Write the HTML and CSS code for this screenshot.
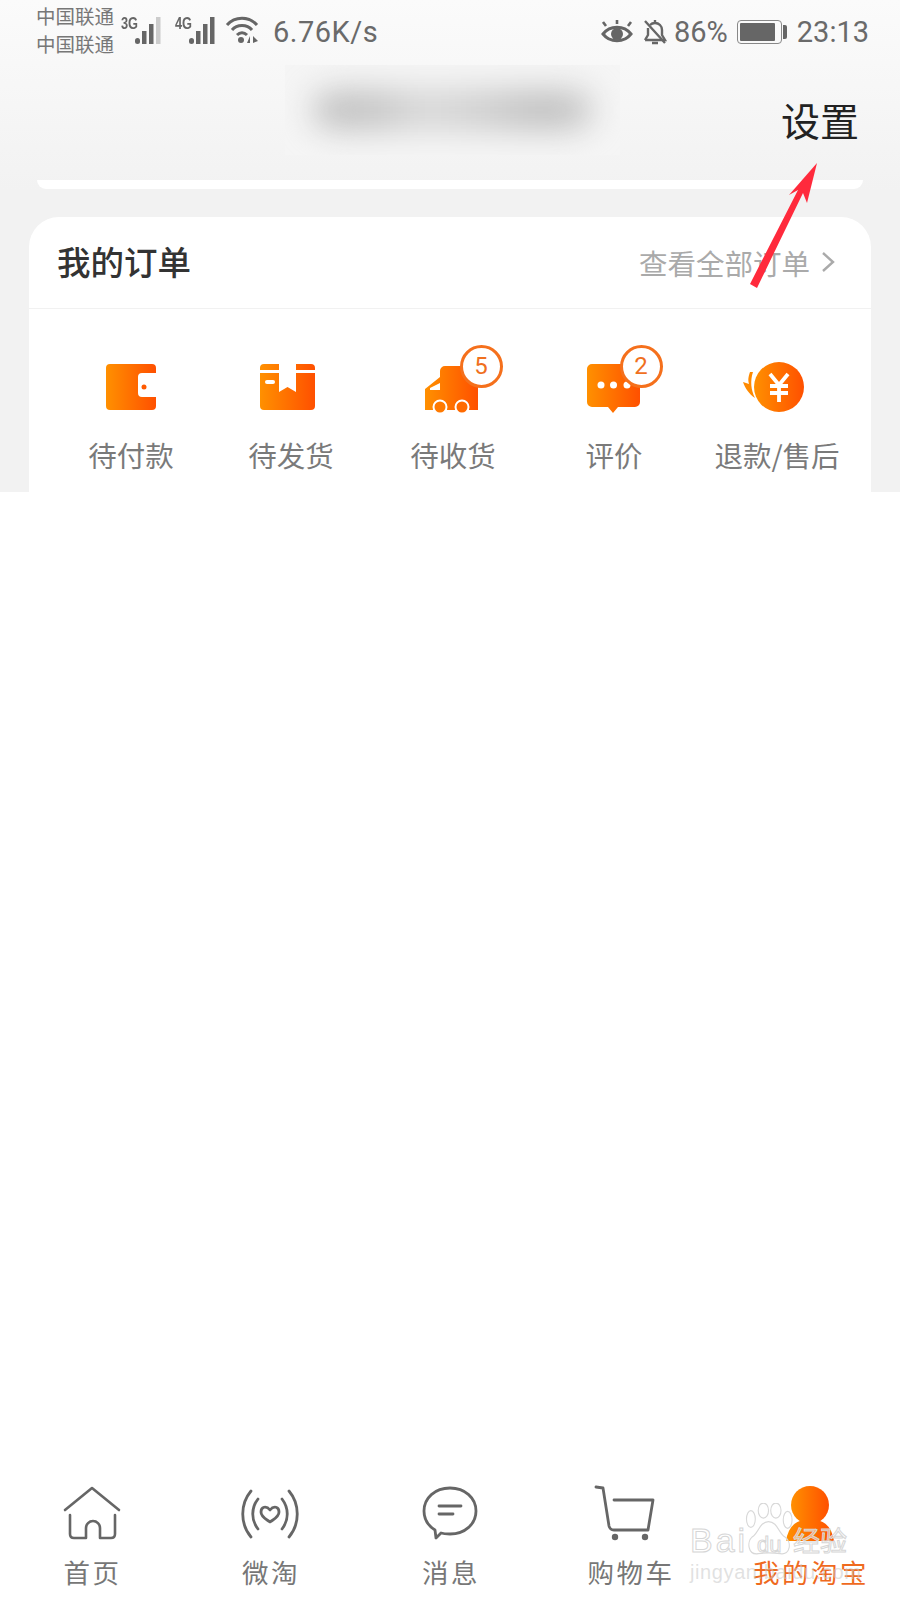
FILE: index.html
```html
<!DOCTYPE html>
<html lang="zh-CN">
<head>
<meta charset="utf-8">
<title>我的淘宝</title>
<link rel="stylesheet" href="styles.css">
</head>
<body>
<svg class="defs" width="0" height="0" aria-hidden="true">
  <defs>
    <linearGradient id="og"><stop offset="0" stop-color="#ff9000"/><stop offset="1" stop-color="#ff5000"/></linearGradient>
  </defs>
</svg>
<div class="page">
  <section class="top">
    <div class="status">
      <div class="carriers"><span>中国联通</span><span>中国联通</span></div>
      <div class="net"><span class="net-label">3G</span>
        <svg class="bars" viewBox="0 0 30 28"><rect x="1" y="21" width="5" height="6" rx="2.500" fill="#666"/><rect x="8" y="14" width="4.500" height="13" fill="#666"/><rect x="15" y="7" width="4.500" height="20" fill="#666"/><rect x="22" y="0" width="4.500" height="27" fill="#ccc"/></svg>
      </div>
      <div class="net"><span class="net-label">4G</span>
        <svg class="bars" viewBox="0 0 30 28"><rect x="1" y="21" width="5" height="6" rx="2.500" fill="#666"/><rect x="8" y="14" width="4.500" height="13" fill="#666"/><rect x="15" y="7" width="4.500" height="20" fill="#666"/><rect x="22" y="0" width="4.500" height="27" fill="#666"/></svg>
      </div>
      <svg class="wifi" viewBox="0 0 34 28" fill="none" stroke="#666" stroke-width="3"><path d="M2 9C10 0 24 0 32 9"/><path d="M7 14C12 8 22 8 27 14"/><path d="M12 19C15 16 19 16 22 19"/><circle cx="16" cy="24" r="3" fill="#666" stroke="none"/><path d="M25 20l-3 7h3zM28 27v-7l5 5z" fill="#666" stroke="none"/></svg>
      <span class="speed">6.76K/s</span>
      <div class="status-right">
        <svg class="eye" viewBox="0 0 32 26" fill="none" stroke="#666" stroke-width="3"><path d="M2 15C9 6 23 6 30 15C23 24 9 24 2 15Z"/><circle cx="16" cy="15" r="6" fill="#666" stroke="none"/><path d="M5 7L2 3M27 7l3-4M16 5V1" stroke-width="2.600"/></svg>
        <svg class="bell" viewBox="0 0 26 26" fill="none" stroke="#666" stroke-width="2.400"><path d="M3 21H23L20 16V11C20 7 17 4 13 4C11 4 9 5 8 6M6 9V16L3 21"/><path d="M13 1V4M10 24H16M3 2L23 24"/></svg>
        <span class="pct">86%</span>
        <div class="battery"><div class="battery-body"><div class="battery-fill"></div></div><div class="battery-tip"></div></div>
        <span class="time">23:13</span>
      </div>
    </div>
    <div class="header">
      <div class="blurred"><div class="blob"></div></div>
      <span class="settings">设置</span>
    </div>
    <div class="stub"></div>
    <div class="card">
      <div class="card-head">
        <h2>我的订单</h2>
        <div class="all">查看全部订单
          <svg class="chev" viewBox="0 0 16 24" fill="none" stroke="#aaa" stroke-width="2.400"><path d="M3 3L13 12L3 21"/></svg>
        </div>
      </div>
      <div class="orders">
        <div class="order">
          <div class="oicon">
            <svg viewBox="0 0 80 64"><path fill="url(#og)" d="M19 8H61a4 4 0 0 1 4 4V17H51a4 4 0 0 0-4 4V37a4 4 0 0 0 4 4H65V50a4 4 0 0 1-4 4H19a4 4 0 0 1-4-4V12a4 4 0 0 1 4-4Z"/><circle cx="53" cy="31" r="2.500" fill="#ff5a00"/></svg>
          </div>
          <span>待付款</span>
        </div>
        <div class="order">
          <div class="oicon">
            <svg viewBox="0 0 80 64"><path fill="url(#og)" d="M9 14V12a4 4 0 0 1 4-4H28V14ZM45 14V8H60a4 4 0 0 1 4 4V14Z"/><path fill="url(#og)" d="M9 17H28V36L36.500 31L45 36V17H64V50a4 4 0 0 1-4 4H13a4 4 0 0 1-4-4Z"/><rect x="14" y="24" width="10" height="4" rx="2" fill="#fff"/></svg>
          </div>
          <span>待发货</span>
        </div>
        <div class="order">
          <div class="oicon">
            <svg viewBox="0 0 80 64"><path fill="url(#og)" d="M32 10H65V54H12V33L27 21V15a5 5 0 0 1 5-5Z"/><path fill="#fff" d="M17 32L27 27V34H17Z"/><circle cx="27" cy="51" r="6.500" fill="#ff7a00" stroke="#fff" stroke-width="2"/><circle cx="49" cy="51" r="6.500" fill="#ff6a00" stroke="#fff" stroke-width="2"/></svg>
            <span class="badge badge-truck">5</span>
          </div>
          <span>待收货</span>
        </div>
        <div class="order">
          <div class="oicon">
            <svg viewBox="0 0 80 64"><path fill="url(#og)" d="M18 8H61a5 5 0 0 1 5 5V46a5 5 0 0 1-5 5H44L39 57L34 51H18a5 5 0 0 1-5-5V13a5 5 0 0 1 5-5Z"/><circle cx="27" cy="29" r="3.500" fill="#fff"/><circle cx="39.500" cy="29" r="3.500" fill="#fff"/><circle cx="53" cy="29" r="3.500" fill="#fff"/></svg>
            <span class="badge badge-chat">2</span>
          </div>
          <span>评价</span>
        </div>
        <div class="order">
          <div class="oicon">
            <svg viewBox="0 0 80 64"><circle cx="42" cy="31" r="25" fill="url(#og)"/><path fill="#ff8a00" d="M13 16C11 22 11 24 12 28L6 26C8 32 12 38 18 42C14 34 13 25 16 16Z"/><path fill="none" stroke="#fff" stroke-width="3.800" d="M33 18L42 29L51 18M42 29V46M33 30H51M33 37H51"/></svg>
          </div>
          <span>退款/售后</span>
        </div>
      </div>
    </div>
  </section>

  <nav class="tabs">
    <div class="tab tab-home">
      <svg viewBox="0 0 60 60" fill="none" stroke="#666" stroke-width="2.600" stroke-linejoin="round" stroke-linecap="round"><path d="M5 26L32 4L59 26"/><path d="M10 31V50q0 4 4 4H26V44a7 7 0 0 1 14 0V54H51q4 0 4-4V31"/></svg>
      <span>首页</span>
    </div>
    <div class="tab">
      <svg viewBox="0 0 60 60" fill="none" stroke="#666" stroke-width="2.800" stroke-linecap="round" stroke-linejoin="round"><path d="M11 7C0 20 0 40 11 53M49 7C60 20 60 40 49 53M18 15C11 24 11 36 18 45M42 15C49 24 49 36 42 45"/><path d="M30 26C26 21 21 23 21 28C21 33 26 35 30 38C34 35 39 33 39 28C39 23 34 21 30 26Z"/></svg>
      <span>微淘</span>
    </div>
    <div class="tab">
      <svg viewBox="0 0 60 60" fill="none" stroke="#666" stroke-width="2.800" stroke-linecap="round" stroke-linejoin="round"><path d="M15 46C7 41 4 35 4 27C4 14 15 4 30 4C45 4 56 14 56 27C56 40 45 50 30 50C27 50 24 50 21 49L16 54Z"/><path d="M19 22H41M19 30H33"/></svg>
      <span>消息</span>
    </div>
    <div class="tab">
      <svg viewBox="0 0 60 60" fill="none" stroke="#666" stroke-width="2.800" stroke-linecap="round" stroke-linejoin="round"><path d="M-4 3L3 4L9 42Q10 46 14 46H48L53 16H14"/><circle cx="15" cy="53" r="3.200" fill="#666" stroke="none"/><circle cx="45" cy="53" r="3.200" fill="#666" stroke="none"/></svg>
      <span>购物车</span>
    </div>
    <div class="tab active">
      <svg viewBox="0 0 60 60"><circle cx="30" cy="21" r="19" fill="url(#og)"/><path fill="url(#og)" d="M6 57Q9 38 24 36H36Q51 38 54 57Z"/></svg>
      <span>我的淘宝</span>
    </div>
  </nav>

  <svg class="arrow" viewBox="0 0 100 140"><path fill="#ff2a3c" d="M79 3L69 43L65 33L19 128L12 124L60 30L51 35Z"/></svg>

  <div class="watermark">
    <svg class="paw" viewBox="0 0 68 64" preserveAspectRatio="none" fill="#fff" fill-opacity=".35" stroke="#d8d8d8" stroke-width="1.500"><ellipse cx="8" cy="19" rx="6" ry="10"/><ellipse cx="25" cy="9" rx="7" ry="9"/><ellipse cx="42" cy="9" rx="7" ry="9"/><ellipse cx="58" cy="20" rx="6" ry="10"/><path d="M32 22C20 22 18 36 10 40C2 46 4 62 18 60C26 59 38 59 48 60C62 62 64 46 54 40C46 36 44 22 32 22Z"/></svg>
    <div class="wm-logo"><span class="wm-bai">Bai</span><span class="wm-du">du</span><span class="wm-jy">经验</span></div>
    <div class="wm-url">jingyan.baidu.com</div>
  </div>
</div>
</body>
</html>
```

FILE: styles.css
```css
* { box-sizing: border-box; }
html, body { margin: 0; padding: 0; background: #fff; }
body { font-family: "Noto Sans CJK SC", "Noto Sans", sans-serif; }
.defs { position: absolute; }
.page { position: relative; width: 900px; height: 1600px; display: flex; flex-direction: column; overflow: hidden; background: #fff; }

.top { height: 492px; overflow: hidden; background: linear-gradient(#fbfbfb 0, #f2f2f2 190px); }

.status { height: 64px; padding: 0 31px 0 36px; display: flex; align-items: center; color: #666; }
.carriers { display: flex; flex-direction: column; font-size: 19.500px; line-height: 28px; color: #777; width: 84px; margin-top: -4px; }
.net { position: relative; width: 54px; height: 30px; margin-top: -4px; display: flex; align-items: flex-end; }
.net-label { font-family: "Liberation Sans Narrow", "Liberation Sans", sans-serif; font-size: 16px; font-weight: 700; line-height: 14px; color: #666; position: absolute; left: 1px; top: 2px; transform: scaleX(.8); transform-origin: left; }
.bars { width: 30px; height: 28px; margin-left: 14px; }
.wifi { width: 34px; height: 28px; margin-left: -3px; margin-top: -4px; }
.speed { font-family: Roboto, sans-serif; font-size: 29px; margin-left: 14px; color: #6a6a6a; letter-spacing: .5px; }
.status-right { margin-left: auto; display: flex; align-items: center; }
.eye { width: 32px; height: 26px; }
.bell { width: 26px; height: 26px; margin-left: 9px; }
.pct { font-family: Roboto, sans-serif; font-size: 29px; margin-left: 6px; color: #6a6a6a; }
.battery { display: flex; align-items: center; margin-left: 9px; }
.battery-body { width: 45px; height: 24px; border: 1.500px solid #888; border-radius: 4px; padding: 2px; }
.battery-fill { width: 35px; height: 100%; background: #666; border-radius: 1px; }
.battery-tip { width: 4px; height: 14px; margin-left: 1px; background: #666; border-radius: 0 2px 2px 0; }
.time { font-family: Roboto, sans-serif; font-size: 29px; margin-left: 10px; color: #6a6a6a; }

.header { height: 116px; padding: 1px 41px 0 285px; display: flex; justify-content: space-between; align-items: flex-start; }
.blurred { width: 335px; height: 90px; background: #f5f5f5; overflow: hidden; display: flex; align-items: center; justify-content: center; }
.blob { width: 280px; height: 38px; background: linear-gradient(90deg, #c0c0c0 0, #c0c0c0 20%, #d6d6d6 40%, #cccccc 60%, #bcbcbc 82%, #c8c8c8 100%); border-radius: 19px; filter: blur(16px); }
.settings { font-size: 39px; line-height: 54px; margin-top: 27px; color: #222; }

.stub { height: 9px; margin: 0 37px; background: #fff; border-radius: 0 0 18px 18px; }

.card { margin: 28px 29px 0; background: #fff; border-radius: 30px 30px 0 0; height: 300px; }
.card-head { height: 92px; border-bottom: 1px solid #f1f1f1; padding: 0 35px 4px 28px; display: flex; align-items: center; justify-content: space-between; }
.card-head h2 { margin: 0; font-size: 33.500px; font-weight: 500; color: #333; }
.all { display: flex; align-items: center; font-size: 28.500px; color: #aaa; margin-top: 3px; }
.chev { width: 16px; height: 24px; margin-left: 10px; }

.orders { display: grid; grid-template-columns: 162px 158px 166px 156px 170px; padding-left: 21px; margin-top: 47px; }
.order { display: flex; flex-direction: column; align-items: center; font-size: 28.500px; color: #7a7a7a; }
.oicon { position: relative; width: 80px; height: 64px; margin-bottom: 15px; }
.oicon svg { display: block; width: 80px; height: 64px; }
.order > span { line-height: 40px; white-space: nowrap; }
.badge { position: absolute; width: 43px; height: 43px; border: 3.500px solid #f5701c; border-radius: 50%; background: #fff; color: #f0701e; font-family: Roboto, sans-serif; font-size: 24px; line-height: 36px; text-align: center; }
.badge-truck { left: 46.500px; top: -11.500px; }
.badge-chat { left: 45.500px; top: -11.500px; }

.tabs { margin-top: auto; height: 116px; display: grid; grid-template-columns: repeat(5, 180px); }
.tab { display: flex; flex-direction: column; align-items: center; font-size: 26.500px; letter-spacing: 2.500px; color: #777; }
.tab svg { width: 60px; height: 60px; overflow: visible; display: block; flex: none; }
.tab span { line-height: 40px; margin-top: 8px; margin-left: 2px; white-space: nowrap; }
.tab-home span { margin-left: 5px; }
.tab.active { color: #ef6a1e; }

.arrow { position: absolute; left: 738px; top: 160px; width: 100px; height: 140px; }

.watermark { position: absolute; left: 688px; top: 1500px; width: 170px; height: 90px; }
.paw { position: absolute; left: 57px; top: 3px; width: 50px; height: 54px; }
.wm-logo { position: absolute; left: 0; top: 20px; width: 170px; height: 40px; }
.wm-bai, .wm-du, .wm-jy { position: absolute; color: rgba(255, 255, 255, .45); -webkit-text-stroke: 1px #d6d6d6; font-family: "Liberation Sans", sans-serif; }
.wm-bai { left: 2px; top: 0; font-size: 34px; line-height: 40px; letter-spacing: 3px; }
.wm-du { left: 69px; top: 12px; font-size: 22px; line-height: 26px; }
.wm-jy { left: 105px; top: 2px; font-size: 27px; line-height: 36px; font-family: "Noto Sans CJK SC", sans-serif; }
.wm-url { position: absolute; left: 2px; top: 60px; font-family: "Liberation Sans", sans-serif; font-size: 20px; line-height: 24px; letter-spacing: .6px; color: rgba(200, 200, 200, .55); white-space: nowrap; }
```
